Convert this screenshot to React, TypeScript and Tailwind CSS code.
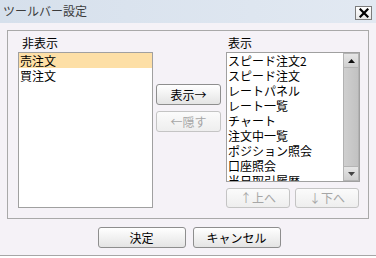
import React from "react";

const hidden = ["売注文", "買注文"];
const shown = [
  "スピード注文2",
  "スピード注文",
  "レートパネル",
  "レート一覧",
  "チャート",
  "注文中一覧",
  "ポジション照会",
  "口座照会",
  "当日取引履歴",
];

const font = { fontFamily: '"Noto Sans CJK JP", "Noto Sans", sans-serif' };

function Btn({ label, disabled, className = "" }: { label: string; disabled?: boolean; className?: string }) {
  return (
    <button
      type="button"
      disabled={disabled}
      className={`flex items-center justify-center rounded-[3px] border text-[12px] leading-none ${
        disabled
          ? "border-[#c4c4c4] bg-gradient-to-b from-[#fbfbfb] to-[#eeeeee] text-[#a6a6a6]"
          : "border-[#8e8e8e] bg-gradient-to-b from-[#ffffff] to-[#e4e4e4] text-black"
      } ${className}`}
    >
      {label}
    </button>
  );
}

export default function App() {
  return (
    <div className="flex h-[258px] w-[376px] flex-col bg-white" style={font}>
      {/* Title bar */}
      <div className="flex h-[23px] items-start justify-between bg-gradient-to-r from-[#d6e0ec] to-[#e2e9f2] pl-[3px] pr-[4px]">
        <span className="mt-[4px] text-[12px] leading-[14px] text-[#3c3c3c]">ツールバー設定</span>
        <div className="mt-[6px] flex h-[14px] w-[17px] items-center justify-center border border-[#7c7c7c] bg-gradient-to-b from-[#ffffff] to-[#e8e8e8]">
          <svg width="10" height="10" viewBox="0 0 10 10">
            <path d="M1.5 1.5 L8.5 8.5 M8.5 1.5 L1.5 8.5" stroke="#000" strokeWidth="2.2" strokeLinecap="square" />
          </svg>
        </div>
      </div>

      {/* Body */}
      <div className="flex h-[233px] flex-col border-b border-[#a6a6a6] bg-[#f5f2f7] px-[7px] pt-[7px]">
        <div className="flex h-[189px] border border-[#a9a9a9]">
          {/* Left: hidden */}
          <div className="ml-[10px] flex w-[135px] flex-col">
            <div className="flex h-[21px] items-end pb-[3px] pl-[4px] text-[12px] leading-none text-black">非表示</div>
            <div className="h-[156px] border border-[#a0a0a0] bg-white">
              {hidden.map((t, i) => (
                <div
                  key={t}
                  className={`h-[15px] px-[1px] text-[12px] leading-[15px] text-black ${i === 0 ? "bg-[#fddfa6]" : ""}`}
                >
                  {t}
                </div>
              ))}
            </div>
          </div>

          {/* Middle buttons */}
          <div className="ml-[3px] flex w-[65px] flex-col gap-[6px] pt-[53px]">
            <Btn label="表示→" className="h-[21px] w-[65px]" />
            <Btn label="←隠す" disabled className="h-[21px] w-[65px]" />
          </div>

          {/* Right: shown */}
          <div className="ml-[5px] flex w-[134px] flex-col">
            <div className="flex h-[21px] items-end pb-[3px] pl-[2px] text-[12px] leading-none text-black">表示</div>
            <div className="flex h-[130px] border border-[#a0a0a0] bg-white">
              <div className="flex-1 overflow-hidden">
                {shown.map((t) => (
                  <div key={t} className="h-[15px] whitespace-nowrap px-[1px] text-[12px] leading-[15px] text-black">
                    {t}
                  </div>
                ))}
              </div>
              {/* Scrollbar */}
              <div className="flex w-[16px] flex-col bg-[#dcdcdc]">
                <div className="flex h-[15px] items-center justify-center border border-[#b4b4b4] bg-gradient-to-b from-[#e6e6e6] to-[#cfcfcf]">
                  <svg width="7" height="4" viewBox="0 0 7 4">
                    <path d="M3.5 0 L7 4 L0 4 Z" fill="#111" />
                  </svg>
                </div>
                <div className="flex-1 border-x border-[#b2b2b2] bg-gradient-to-r from-[#cfcfcf] to-[#c2c2c2]" />
                <div className="flex h-[15px] items-center justify-center border border-[#b4b4b4] bg-gradient-to-b from-[#e6e6e6] to-[#cfcfcf]">
                  <svg width="7" height="4" viewBox="0 0 7 4">
                    <path d="M0 0 L7 0 L3.5 4 Z" fill="#444" />
                  </svg>
                </div>
              </div>
            </div>
            <div className="mt-[6px] flex justify-between pr-[1px]">
              <Btn label="↑上へ" disabled className="h-[20px] w-[64px]" />
              <Btn label="↓下へ" disabled className="h-[20px] w-[64px]" />
            </div>
          </div>
        </div>

        {/* Bottom buttons */}
        <div className="mt-[8px] flex justify-center gap-[7px] pl-[2px]">
          <Btn label="決定" className="h-[21px] w-[88px]" />
          <Btn label="キャンセル" className="h-[21px] w-[88px]" />
        </div>
      </div>
    </div>
  );
}
